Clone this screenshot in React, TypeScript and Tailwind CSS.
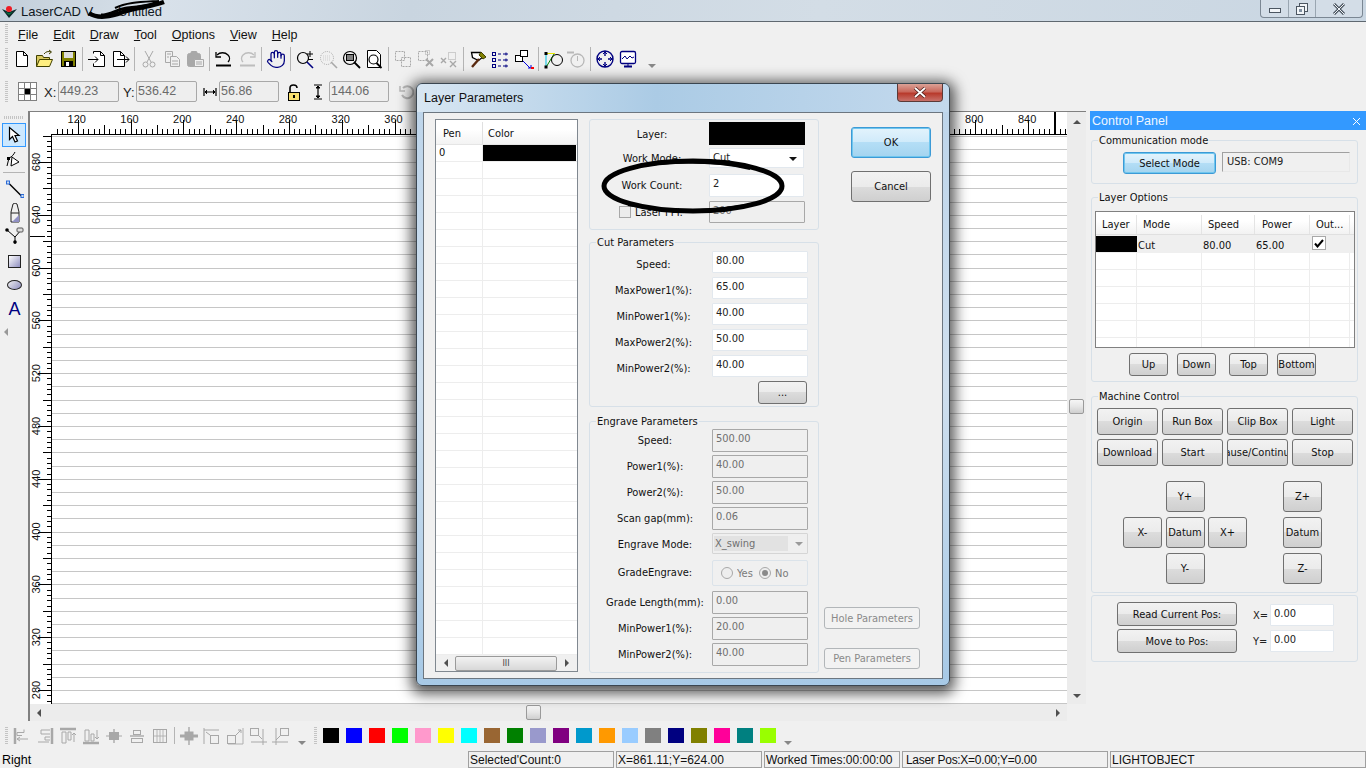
import React from "react";
import { Hand } from "lucide-react";

const cx = (...c: (string | false | undefined)[]) => c.filter(Boolean).join(" ");

const Ico = ({ children, w = 20, h = 20 }: { children: React.ReactNode; w?: number; h?: number }) => (
  <svg width={w} height={h} viewBox={`0 0 ${w} ${h}`} fill="none" stroke="#000" strokeWidth="1" shapeRendering="auto">
    {children}
  </svg>
);

const G = "#a8a8a8";

const topIcons: Record<string, React.ReactNode> = {
  new: <path d="M4.5 2.5h7l4 4v11h-11zM11.5 2.5v4h4" fill="#fff" />,
  open: (
    <>
      <path d="M1.5 17.5v-11h6l1 2h6v2" fill="#d8c860" stroke="#404000" />
      <path d="M1.5 17.5l3-7h13l-3 7z" fill="#ffef80" stroke="#404000" />
      <path d="M9 5c2-2.5 4-3 7-2M14 1l2.5 2-2.5 2" stroke="#404000" />
    </>
  ),
  save: (
    <>
      <rect x="3.5" y="2.5" width="14" height="15" fill="#808000" stroke="#000" />
      <rect x="6" y="3" width="9" height="6" fill="#ddd" stroke="none" />
      <rect x="6" y="12" width="9" height="5" fill="#000" stroke="none" />
      <rect x="8" y="13" width="3" height="4" fill="#fff" stroke="none" />
    </>
  ),
  imp: (
    <>
      <path d="M6.5 4.5v-2h7l4 4v11h-11v-3M13.5 2.5v4h4" fill="#fff" />
      <path d="M1 10.5h10M8 7.5l3 3-3 3" />
    </>
  ),
  exp: (
    <>
      <path d="M3.5 2.5h7l4 4v11h-11zM10.5 2.5v4h4" fill="#fff" />
      <path d="M7 10.5h12M16 7.5l3 3-3 3" />
    </>
  ),
  cut: (
    <g stroke={G}>
      <path d="M6 2l6 11M14 2l-6 11" />
      <circle cx="6.5" cy="15.5" r="2.5" />
      <circle cx="13.5" cy="15.5" r="2.5" />
    </g>
  ),
  copy: (
    <g stroke={G}>
      <path d="M3.5 2.5h7v11h-7z" />
      <path d="M8.5 7.5h6l3 3v7h-9z" fill="#f0f0f0" />
      <path d="M5 5h4M5 8h2M10 12h6M10 15h6" />
    </g>
  ),
  paste: (
    <g stroke={G}>
      <rect x="2.5" y="4.5" width="13" height="13" rx="2" fill={G} />
      <rect x="6" y="2.5" width="6" height="4" rx="1" fill={G} />
      <path d="M9.5 10.5h9v7h-9z" fill="#f0f0f0" />
      <path d="M11 13h6M11 15h6" />
    </g>
  ),
  undo: (
    <>
      <path d="M2 16.5h15" strokeWidth="2" />
      <path d="M3 6c3-3 8-3 11 0 2 2 2 5 0 7" strokeWidth="1.3" />
      <path d="M2 3v5h5" strokeWidth="1.3" />
    </>
  ),
  redo: (
    <g stroke="#bdbdbd">
      <path d="M3 16.5h15" strokeWidth="2" />
      <path d="M17 6c-3-3-8-3-11 0-2 2-2 5 0 7" strokeWidth="1.3" />
      <path d="M18 3v5h-5" strokeWidth="1.3" />
    </g>
  ),
  zoomIn: (
    <>
      <circle cx="8" cy="9" r="5.5" strokeWidth="1.2" />
      <path d="M12 13l6 6" stroke="#000080" strokeWidth="1.6" />
      <path d="M15 2v6M12 5h6M13 10.5h5" />
    </>
  ),
  zoomGray: (
    <>
      <circle cx="9" cy="9" r="6.5" stroke={G} strokeDasharray="1 1" />
      <path d="M5 7h8M5 9h8M5 11h8" stroke="#cfcfcf" strokeDasharray="1 1" />
      <path d="M13 13l6 6" stroke={G} strokeWidth="1.6" />
    </>
  ),
  zoomSel: (
    <>
      <circle cx="9" cy="9" r="6.5" strokeWidth="1.2" />
      <rect x="5.5" y="5.5" width="7" height="6" fill="#808080" />
      <path d="M13 13l6 6" strokeWidth="1.8" />
    </>
  ),
  zoomPage: (
    <>
      <path d="M3.5 1.5h9l4 4v13h-13z" fill="#fff" />
      <circle cx="9.5" cy="10.5" r="4.5" strokeWidth="1.2" />
      <path d="M12.5 14l5 5" strokeWidth="1.8" />
    </>
  ),
  al1: (
    <g stroke={G} strokeDasharray="2 1">
      <rect x="2.5" y="2.5" width="9" height="9" />
      <rect x="8.5" y="8.5" width="9" height="9" />
    </g>
  ),
  al2: (
    <g stroke={G}>
      <rect x="2.5" y="2.5" width="9" height="9" strokeDasharray="2 1" />
      <path d="M10 10l7 7M17 10l-7 7" strokeWidth="2" />
      <rect x="9.5" y="1.5" width="4" height="4" strokeDasharray="1 1" />
    </g>
  ),
  al3: (
    <g stroke={G}>
      <path d="M2 9l5 5M7 9l-5 5M11 12l6 6M17 12l-6 6" strokeWidth="1.4" />
      <rect x="9.5" y="3.5" width="7" height="7" strokeDasharray="1 1" />
    </g>
  ),
  hammer: (
    <>
      <path d="M3.5 3.5h9l3 4-5 4-6-3z" fill="#fff" strokeWidth="1.3" />
      <path d="M13 3l5 5-3 2-4-4z" fill="#808000" stroke="#404000" />
      <path d="M11 10l-7 8" stroke="#5a2a10" strokeWidth="2.4" />
    </>
  ),
  list: (
    <g stroke="#000080">
      <rect x="1.5" y="3.5" width="3" height="3" />
      <rect x="1.5" y="9.5" width="3" height="3" />
      <rect x="1.5" y="15.5" width="3" height="3" />
      <path d="M7 5h3M12 5h5M7 11h3M12 11h5M7 17h3M12 17h5M15 3.5v3M15 9.5v3M15 15.5v3" />
    </g>
  ),
  nodes: (
    <>
      <rect x="1.5" y="6.5" width="7" height="6" fill="#fff" />
      <rect x="6.5" y="1.5" width="7" height="6" fill="#fff" />
      <path d="M9 12l7 7" stroke="#0000e0" />
      <path d="M17 16v3h-3" stroke="#0000e0" />
      <rect x="17" y="18" width="3" height="2" fill="#f00" stroke="none" />
    </>
  ),
  circ: (
    <>
      <path d="M3 4.5h9" stroke="#e8e800" />
      <path d="M3 5v13" stroke="#00c0e0" />
      <path d="M3.5 17.5L11 5" stroke="#008000" />
      <rect x="1.5" y="3" width="3" height="3" fill="#000" stroke="none" />
      <rect x="1.5" y="16.5" width="3" height="3" fill="#000" stroke="none" />
      <circle cx="14" cy="11" r="5.5" />
    </>
  ),
  circGray: (
    <g stroke="#b8b8b8">
      <circle cx="11.5" cy="11.5" r="6.5" strokeWidth="1.3" />
      <path d="M11.5 7v5" />
      <path d="M1 3.5h7" strokeWidth="2" />
    </g>
  ),
  jog: (
    <g stroke="#000080">
      <circle cx="10" cy="10" r="8" strokeWidth="1.4" />
      <path d="M10 2v5M10 13v5M2 10h5M13 10h5" strokeWidth="1.4" />
      <path d="M8 5l2-2 2 2M8 15l2 2 2-2M5 8l-2 2 2 2M15 8l2 2-2 2" />
    </g>
  ),
  monitor: (
    <g stroke="#000080">
      <rect x="2.5" y="2.5" width="15" height="12" rx="1.5" fill="#fff" strokeWidth="1.3" />
      <path d="M4 10l3-3 2 3 3-3 2 2 2-1" />
      <path d="M6 17.5h8" strokeWidth="2" />
      <path d="M10 15v2" />
    </g>
  ),
};

const alignIcons: React.ReactNode[] = [
  <g stroke={G}><path d="M3 2v16" strokeWidth="2.5" /><path d="M5 6.5h7v-3M5 6.5v3h5M5 13h11" /><path d="M8 11l-3 2 3 2" /></g>,
  <g stroke={G}><path d="M17 2v16" strokeWidth="2.5" /><path d="M15 4H6v4h9M15 11h-5v3h5" /><path d="M3 16h11" /></g>,
  <g stroke={G}><path d="M2 3h16" strokeWidth="2.5" /><path d="M4 6h4v11H4zM10 6h3v8h-3z" /><path d="M16 7v9M14 9l2-2 2 2" /></g>,
  <g stroke={G}><path d="M2 17h16" strokeWidth="2.5" /><path d="M4 4h4v11H4zM10 8h3v7h-3z" /><path d="M16 4v9M14 11l2 2 2-2" /></g>,
  <g stroke={G}><path d="M10 3v14" strokeWidth="1.4" /><rect x="5.5" y="6.5" width="9" height="7" fill={G} /><path d="M2 10h3M15 10h3" /></g>,
  <g stroke={G}><path d="M3 10h14" strokeWidth="1.4" /><rect x="6.5" y="4.5" width="7" height="4" /><rect x="4.5" y="12.5" width="11" height="4" /></g>,
  <g stroke={G}><rect x="3.5" y="3.5" width="13" height="13" /><path d="M3 10h14M10 3v14M7 3v14M13 3v14" strokeWidth="0.8" /></g>,
];

const moveIcons: React.ReactNode[] = [
  <g stroke={G}><path d="M10 1v18M2 10h16" strokeWidth="1.4" /><rect x="6" y="6" width="8" height="8" fill={G} /><path d="M1 10h18" strokeWidth="3" /></g>,
  <g stroke={G}><path d="M2 2v16M2 4h15" /><rect x="8.5" y="9.5" width="8" height="8" /><path d="M4 6l4 3" /></g>,
  <g stroke={G}><path d="M18 2v16M3 18h15" strokeWidth="0.9" /><rect x="2.5" y="9.5" width="8" height="8" /><path d="M11 9l5-5M13 4h3v3" /></g>,
  <g stroke={G}><path d="M3 16h16M15 3v16" /><rect x="2.5" y="2.5" width="8" height="7" /><path d="M10 9l4 4" /></g>,
  <g stroke={G}><path d="M1 16h16M5 2v17" /><rect x="9.5" y="2.5" width="8" height="7" /><path d="M9 10l-4 4" /></g>,
];

const leftIcons: React.ReactNode[] = [
  <><path d="M3 7c3-1 5-4 6-6" /><path d="M3 7L1 15" /><path d="M6 6l-1 9 8-4z" fill="#fff" /><rect x="1" y="6" width="3" height="3" fill="#000" stroke="none" /></>,
  <><path d="M2.5 3l13 13" strokeWidth="1.4" /><rect x="0.5" y="1" width="3" height="3" fill="#cde" stroke="#2a6ad8" /><rect x="15" y="14.5" width="3" height="3" fill="#cde" stroke="#2a6ad8" /></>,
  <><path d="M8 1l2-1 2 1 2 8v10H6V9z" fill="#f0f0f0" stroke="#222" /><path d="M6 10h8" stroke="#222" /><path d="M7 19l7-7v7z" fill="#9090c4" stroke="none" /></>,
  <><path d="M2 3l8 7 7-8" /><path d="M10 10v7" /><circle cx="2" cy="3" r="1.8" fill="#000" stroke="none" /><circle cx="10" cy="15" r="1.8" fill="#000" stroke="none" /><rect x="12" y="1" width="6" height="4" rx="1" fill="#ddd" stroke="#555" /></>,
];

const App = () => {
  return (
    <div className="relative flex h-[768px] w-[1366px] flex-col overflow-hidden bg-[#f0f0f0] font-['Liberation_Sans',sans-serif] text-[12px] leading-none text-black">
      <TitleBar />
      <MenuBar />
      <MainToolbar />
      <CoordBar />
      <div className="flex h-[638px] w-full">
        <div className="flex w-[1090px] flex-col">
          <div className="flex h-[611px]">
            <LeftToolbar />
            <CanvasFrame />
          </div>
          <BottomToolbar />
        </div>
        <ControlPanel />
      </div>
      <StatusBar />
      <LayerDialog />
    </div>
  );
};

const TitleBar = () => (
  <div className="flex h-[22px] shrink-0 items-start border-b border-[#5f6870] bg-[linear-gradient(100deg,#c3cfda_0%,#d8e1ea_12%,#c9d5e0_30%,#d3dde6_60%,#c9d6e2_100%)]">
    <svg width="18" height="20" viewBox="0 0 18 20" className="ml-[1px] mt-[1px] shrink-0">
      <path d="M1 8l7 9 8-9-8 3z" fill="#0c2a2a" />
      <path d="M4 11l4 3 4-3-4 1z" fill="#0a7040" />
      <circle cx="8" cy="8" r="3" fill="#ee1c25" />
    </svg>
    <div className="relative ml-[2px] mt-[5px] flex h-[14px] w-[140px] text-[13px] text-[#10181f]">
      <span>LaserCAD V</span>
      <span className="absolute left-[97px] top-0">Untitled</span>
      <svg width="100" height="22" viewBox="0 0 100 22" className="absolute left-[60px] top-[-5px]">
        <path d="M8 13C16 19 30 17 42 12 56 7 70 7 83 2" stroke="#000" strokeWidth="4.5" fill="none" />
        <path d="M20 15c10 0 16-6 26-7 12-1 24-3 30-6" stroke="#000" strokeWidth="3" fill="none" />
        <path d="M34 8C46 2 60 2 78 1" stroke="#000" strokeWidth="2" fill="none" />
      </svg>
    </div>
    <div className="ml-auto mr-[3px] flex h-[18px] w-[103px] rounded-b-[4px] border border-t-0 border-[#7b8793] bg-[#d3dde7]">
      <div className="flex w-[28px] items-center justify-center border-r border-[#9aa6b1]">
        <div className="mt-[4px] h-[5px] w-[12px] border border-[#4c5661] bg-[#f2f5f8]" />
      </div>
      <div className="flex w-[27px] items-center justify-center border-r border-[#9aa6b1]">
        <svg width="12" height="12" viewBox="0 0 12 12" fill="#f2f5f8" stroke="#4c5661">
          <rect x="3.5" y="0.5" width="8" height="8" />
          <rect x="0.5" y="3.5" width="8" height="8" />
          <rect x="3" y="6" width="3" height="3" fill="#8090a0" stroke="none" />
        </svg>
      </div>
      <div className="flex flex-1 items-center justify-center">
        <svg width="14" height="12" viewBox="0 0 14 12" fill="none">
          <path d="M2 1l10 10M12 1L2 11" stroke="#4c5661" strokeWidth="3" />
          <path d="M2 1l10 10M12 1L2 11" stroke="#eef2f6" strokeWidth="1" />
        </svg>
      </div>
    </div>
  </div>
);

const Grip = ({ className }: { className?: string }) => (
  <div className={cx("w-[3px] bg-[repeating-linear-gradient(to_bottom,#c4c4c4_0,#c4c4c4_1px,transparent_1px,transparent_2px)]", className)} />
);

const MenuBar = () => (
  <div className="flex h-[23px] shrink-0 items-center pl-[5px]">
    <Grip className="h-[19px]" />
    <div className="ml-[10px] flex gap-[15px] pt-[3px] text-[12.5px] text-[#111]">
      {["File", "Edit", "Draw", "Tool", "Options", "View", "Help"].map((m) => (
        <span key={m}>
          <u>{m[0]}</u>
          {m.slice(1)}
        </span>
      ))}
    </div>
  </div>
);

const TB = ({ children }: { children: React.ReactNode }) => (
  <div className="flex h-[23px] w-[23px] shrink-0 items-center justify-center">{children}</div>
);
const Sep = ({ h = "h-[24px]" }: { h?: string }) => (
  <div className="flex w-[6px] shrink-0 justify-center">
    <div className={cx("w-px bg-[#b4b4b4]", h)} />
  </div>
);

const mainGroups: string[][] = [
  ["new", "open", "save"],
  ["imp", "exp"],
  ["cut", "copy", "paste"],
  ["undo", "redo"],
  ["hand"],
  ["zoomIn", "zoomGray", "zoomSel", "zoomPage"],
  ["al1", "al2", "al3"],
  ["hammer", "list", "nodes"],
  ["circ", "circGray"],
  ["jog", "monitor"],
];

const MainToolbar = () => (
  <div className="flex h-[28px] shrink-0 items-center pl-[5px]">
    <Grip className="h-[22px]" />
    <div className="ml-[2px] flex items-center pl-[0.5px]">
      {mainGroups.map((g, i) => (
        <React.Fragment key={i}>
          {i > 0 && <Sep />}
          {g.map((k) => (
            <TB key={k}>
              {k === "hand" ? <Hand size={20} strokeWidth={1.5} color="#000080" /> : <Ico>{topIcons[k]}</Ico>}
            </TB>
          ))}
        </React.Fragment>
      ))}
      <div className="ml-[8px] mt-[13px] h-0 w-0 border-x-[4px] border-t-[4px] border-x-transparent border-t-[#888]" />
    </div>
  </div>
);

const Readout = ({ value, className }: { value: string; className: string }) => (
  <div className={cx("h-[21px] rounded-[2px] border border-[#a8a8a8] bg-[#eeeeee] pl-[1px] pt-[3px] text-[12.5px] text-[#6b6b6b]", className)}>
    {value}
  </div>
);

const CoordBar = () => (
  <div className="flex h-[38px] shrink-0 items-start pl-[5px] pt-[8px]">
    <Grip className="h-[22px]" />
    <div className="ml-[10px] mt-[1px] grid h-[19px] w-[19px] grid-cols-3 grid-rows-3 gap-px border border-[#808080] bg-[#808080]">
      {[0, 1, 2, 3, 4, 5, 6, 7, 8].map((n) => (
        <div key={n} className={n === 4 ? "bg-black" : "bg-white"} />
      ))}
    </div>
    <span className="ml-[7px] mt-[5px] w-[14px] text-[13px] text-[#222]">X:</span>
    <Readout value="449.23" className="w-[61px]" />
    <span className="ml-[4px] mt-[5px] w-[13px] text-[13px] text-[#222]">Y:</span>
    <Readout value="536.42" className="w-[61px]" />
    <div className="ml-[6px] mt-[5px]">
      <Ico w={14} h={12}>
        <path d="M1 2v8M13 2v8M2 6h10" strokeWidth="1.2" />
        <path d="M4 4L2 6l2 2M10 4l2 2-2 2" fill="#000" />
      </Ico>
    </div>
    <Readout value="56.86" className="ml-[2px] w-[60px]" />
    <div className="ml-[8px] mt-[3px]">
      <Ico w={14} h={18}>
        <path d="M3 8V4c0-4 7-4 7 0" strokeWidth="1.6" />
        <rect x="1.5" y="8.5" width="11" height="8" fill="#f8e070" stroke="#000" />
        <rect x="6" y="11" width="2" height="3" fill="#000" stroke="none" />
      </Ico>
    </div>
    <div className="ml-[12px] mt-[3px]">
      <Ico w={10} h={16}>
        <path d="M1 1h8M1 15h8M5 2v12" strokeWidth="1.2" />
        <path d="M3 4l2-2 2 2zM3 12l2 2 2-2z" fill="#000" />
      </Ico>
    </div>
    <Readout value="144.06" className="ml-[6px] w-[60px]" />
    <div className="ml-[9px] mt-[2px]">
      <Ico w={16} h={18}>
        <path d="M5 5a6 6 0 1 1-1 7" stroke="#b8b8b8" strokeWidth="2" />
        <path d="M2 3v5h5" stroke="#b8b8b8" strokeWidth="1.5" />
      </Ico>
    </div>
  </div>
);

const LeftToolbar = () => (
  <div className="flex w-[28px] shrink-0 flex-col items-center">
    <div className="mt-[5px] h-[3px] w-[20px] bg-[repeating-linear-gradient(to_right,#c4c4c4_0,#c4c4c4_1px,transparent_1px,transparent_2px)]" />
    <div className="mt-[4px] flex h-[24px] w-[24px] items-center justify-center border border-[#3399ff] bg-[#cce8ff]">
      <Ico w={14} h={18}>
        <path d="M2.5 1.5v12l3-3 2.5 5.5 2.5-1-2.5-5.5h4z" fill="#fff" strokeWidth="1.2" />
      </Ico>
    </div>
    <div className="ml-[1px] mt-[2px] flex h-[22px] w-[24px] items-center justify-center">
      <Ico w={18} h={18}>{leftIcons[0]}</Ico>
    </div>
    <div className="mt-[1px] h-px w-[22px] bg-[#b4b4b4]" />
    <div className="ml-[1px] mt-[4px] flex h-[24px] w-[24px] items-center justify-center">
      <Ico w={18} h={18}>{leftIcons[1]}</Ico>
    </div>
    <div className="ml-[1px] flex h-[24px] w-[24px] items-center justify-center">
      <Ico w={20} h={20}>{leftIcons[2]}</Ico>
    </div>
    <div className="ml-[1px] flex h-[24px] w-[24px] items-center justify-center">
      <Ico w={20} h={20}>{leftIcons[3]}</Ico>
    </div>
    <div className="ml-[1px] flex h-[24px] w-[24px] items-center justify-center">
      <div className="h-[13px] w-[13px] border border-[#222] bg-[linear-gradient(135deg,#fff,#8f8fc0)]" />
    </div>
    <div className="ml-[1px] flex h-[24px] w-[24px] items-center justify-center">
      <div className="h-[10px] w-[15px] rounded-[50%] border border-[#222] bg-[linear-gradient(135deg,#eee,#8f8fc0)]" />
    </div>
    <div className="ml-[1px] flex h-[24px] w-[24px] items-center justify-center font-['Liberation_Sans',sans-serif] text-[18px] text-[#000080]">
      A
    </div>
    <div className="mr-[16px] mt-[7px] h-0 w-0 border-y-[4px] border-r-[4px] border-y-transparent border-r-[#999]" />
  </div>
);

const X0 = 47.7;
const Y0 = 50;
const K = 1.32;
const xOf = (v: number) => X0 + (v - 120) * K;
const yOf = (v: number) => Y0 + (680 - v) * K;

const Ruler = () => {
  const xt: number[] = [];
  for (let v = 104; v <= 868; v += 4) xt.push(v);
  const yt: number[] = [];
  for (let v = 700; v >= 268; v -= 4) yt.push(v);
  const grid: number[] = [];
  for (let v = 700; v >= 270; v -= 10) grid.push(v);
  const xl: number[] = [];
  for (let v = 120; v <= 840; v += 40) xl.push(v);
  const yl: number[] = [];
  for (let v = 680; v >= 280; v -= 40) yl.push(v);
  const len = (v: number) => (v % 40 === 0 ? 14 : v % 20 === 0 ? 9 : 5);
  return (
    <svg width="1037" height="592" viewBox="0 0 1037 592" className="block shrink-0 bg-white" shapeRendering="crispEdges">
      {grid.map((v) => (
        <line key={v} x1="22" x2="1037" y1={Math.round(yOf(v)) + 0.5} y2={Math.round(yOf(v)) + 0.5} stroke="#c6c6c6" />
      ))}
      <line x1="22" x2="1037" y1="22.5" y2="22.5" stroke="#000" />
      <line x1="21.5" x2="21.5" y1="22" y2="592" stroke="#000" />
      {xt.map((v) => (
        <line key={v} x1={Math.round(xOf(v)) + 0.5} x2={Math.round(xOf(v)) + 0.5} y1="22" y2={22 - len(v)} stroke="#000" />
      ))}
      {yt.map((v) => (
        <line key={v} y1={Math.round(yOf(v)) + 0.5} y2={Math.round(yOf(v)) + 0.5} x1="22" x2={22 - len(v)} stroke="#000" />
      ))}
      <line x1="1024.5" x2="1024.5" y1="0" y2="22" stroke="#000" strokeWidth="2" />
      <line x1="0" x2="15" y1="124.5" y2="124.5" stroke="#000" strokeWidth="1" />
      {xl.map((v) => (
        <text key={v} x={xOf(v) - 1} y="11" textAnchor="middle" fontSize="11" fill="#111" fontFamily="Liberation Sans, sans-serif">
          {v}
        </text>
      ))}
      {yl.map((v) => (
        <text
          key={v}
          x="0"
          y="0"
          transform={`translate(9.5 ${yOf(v)}) rotate(-90)`}
          textAnchor="middle"
          fontSize="11"
          fill="#111"
          fontFamily="Liberation Sans, sans-serif"
        >
          {v}
        </text>
      ))}
    </svg>
  );
};

const Tri = ({ dir, c = "#505050" }: { dir: "u" | "d" | "l" | "r"; c?: string }) => {
  const p = { u: "0,4 4,0 8,4", d: "0,0 8,0 4,4", l: "4,0 4,8 0,4", r: "0,0 0,8 4,4" }[dir];
  const vert = dir === "u" || dir === "d";
  return (
    <svg width={vert ? 8 : 4} height={vert ? 4 : 8} viewBox={vert ? "0 0 8 4" : "0 0 4 8"}>
      <polygon points={p} fill={c} />
    </svg>
  );
};

const Thumb = ({ className }: { className: string }) => (
  <div className={cx("rounded-[2px] border border-[#9a9a9a] bg-[linear-gradient(to_bottom,#f6f6f6,#e6e6e6_50%,#cfcfcf)]", className)} />
);

const CanvasFrame = () => (
  <div className="flex h-[610px] w-[1058px] flex-col border-l-2 border-t border-[#808080]">
    <div className="flex h-[592px]">
      <Ruler />
      <div className="flex w-[19px] flex-col items-center bg-[#ececec]">
        <div className="flex h-[20px] items-center">
          <Tri dir="u" />
        </div>
        <div className="h-[267px]" />
        <Thumb className="h-[15px] w-[15px]" />
        <div className="flex-1" />
        <div className="flex h-[17px] items-center">
          <Tri dir="d" />
        </div>
      </div>
    </div>
    <div className="flex h-[17px]">
      <div className="flex h-full w-[1037px] items-center bg-[#ececec]">
        <div className="flex w-[18px] justify-center">
          <Tri dir="l" />
        </div>
        <div className="w-[478px]" />
        <Thumb className="h-[15px] w-[15px]" />
        <div className="flex-1" />
        <div className="flex w-[18px] justify-center">
          <Tri dir="r" />
        </div>
      </div>
      <div className="w-[19px] bg-[#f0f0f0]" />
    </div>
  </div>
);

const swatches = [
  "bg-[#000000]", "bg-[#0000ff]", "bg-[#ff0000]", "bg-[#00ff00]", "bg-[#ff99cc]", "bg-[#ffff00]",
  "bg-[#00ffff]", "bg-[#996633]", "bg-[#008000]", "bg-[#9999cc]", "bg-[#800080]", "bg-[#0099cc]",
  "bg-[#ff9900]", "bg-[#99ccff]", "bg-[#808080]", "bg-[#000080]", "bg-[#808000]", "bg-[#ff0099]",
  "bg-[#008080]", "bg-[#99ff00]",
];

const BottomToolbar = () => (
  <div className="flex h-[27px] items-center pl-[5px]">
    <Grip className="h-[18px]" />
    <div className="ml-[2px] flex items-center">
      {alignIcons.map((n, i) => (
        <TB key={i}>
          <Ico>{n}</Ico>
        </TB>
      ))}
      <Sep h="h-[17px]" />
      {moveIcons.map((n, i) => (
        <TB key={i}>
          <Ico>{n}</Ico>
        </TB>
      ))}
      <div className="ml-[6px] mt-[14px] h-0 w-0 border-x-[4px] border-t-[4px] border-x-transparent border-t-[#888]" />
    </div>
    <Grip className="ml-[8px] h-[18px]" />
    <div className="ml-[6px] flex gap-[7px]">
      {swatches.map((s) => (
        <div key={s} className={cx("h-[15px] w-[16px]", s)} />
      ))}
    </div>
    <div className="ml-[8px] mt-[14px] h-0 w-0 border-x-[4px] border-t-[4px] border-x-transparent border-t-[#888]" />
  </div>
);

const StatusCell = ({ className, children }: { className: string; children?: React.ReactNode }) => (
  <div className={cx("flex h-[17px] items-center overflow-hidden whitespace-nowrap border border-[#a0a0a0] pl-[1px] text-[#111]", className)}>
    {children}
  </div>
);

const StatusBar = () => (
  <div className="flex h-[19px] shrink-0 items-start pt-[2px]">
    <div className="w-[468px] pl-[2px] pt-[3px] text-[12.5px]">Right</div>
    <StatusCell className="w-[146px]">Selected'Count:0</StatusCell>
    <StatusCell className="ml-[2px] w-[146px]">X=861.11;Y=624.00</StatusCell>
    <StatusCell className="ml-[2px] w-[136px]">Worked Times:00:00:00</StatusCell>
    <StatusCell className="ml-[2px] w-[206px] pl-[3px] tracking-[-0.3px]">Laser Pos:X=0.00;Y=0.00</StatusCell>
    <StatusCell className="ml-[2px] w-[256px]">LIGHTOBJECT</StatusCell>
  </div>
);

const Btn = ({
  label,
  className,
  kind = "normal",
}: {
  label: string;
  className: string;
  kind?: "normal" | "default" | "disabled";
}) => (
  <div
    className={cx(
      "flex shrink-0 items-center justify-center overflow-hidden whitespace-nowrap rounded-[3px] border",
      kind === "normal" && "border-[#707070] bg-[linear-gradient(to_bottom,#f2f2f2_0%,#ebebeb_50%,#dcdcdc_50%,#cfcfcf_100%)] text-[#111]",
      kind === "default" && "border-[#3c9ad6] bg-[linear-gradient(to_bottom,#e3f3fc_0%,#cfeafa_50%,#b4def6_50%,#a4d4ef_100%)] text-[#111] shadow-[inset_0_0_0_1px_#6fc6ee]",
      kind === "disabled" && "border-[#b2b6b9] bg-[#f2f2f2] text-[#8a8a8a]",
      className,
    )}
  >
    {label}
  </div>
);

const Group = ({
  label,
  className,
  children,
}: {
  label?: string;
  className: string;
  children: React.ReactNode;
}) => (
  <div className={cx("relative rounded-[3px] border border-[#d7e0e8]", className)}>
    {label && (
      <span className="absolute left-[6px] top-[-6px] bg-[#f0f0f0] px-px text-[#111]">{label}</span>
    )}
    {children}
  </div>
);

const Field = ({
  value,
  disabled,
  className,
}: {
  value: string;
  disabled?: boolean;
  className: string;
}) => (
  <div
    className={cx(
      "shrink-0 rounded-[1px] border pl-[3px] pt-[3px] text-[#222]",
      disabled ? "border-[#a8a8a8] bg-[#efefef] text-[#707070]" : "border-[#e2e8ee] bg-white",
      className,
    )}
  >
    {value}
  </div>
);

const cutRows = [
  ["Speed:", "80.00"],
  ["MaxPower1(%):", "65.00"],
  ["MinPower1(%):", "40.00"],
  ["MaxPower2(%):", "50.00"],
  ["MinPower2(%):", "40.00"],
];

const Label = ({ text, className }: { text: string; className: string }) => (
  <div className={cx("flex shrink-0 items-center justify-center whitespace-nowrap text-[#111]", className)}>{text}</div>
);

const ParamRow = ({
  label,
  children,
  pad,
}: {
  label: string;
  children: React.ReactNode;
  pad: "cut" | "eng";
}) => (
  <div className="flex">
    <Label text={label} className={pad === "cut" ? "h-[22px] w-[122px] pl-[5px] pt-[4px]" : "h-[23px] w-[122px] pl-[8px]"} />
    {children}
  </div>
);

const Radio = ({ on }: { on?: boolean }) => (
  <div className="flex h-[12px] w-[12px] items-center justify-center rounded-full border border-[#a8a8a8] bg-[#eeeeee]">
    {on && <div className="h-[6px] w-[6px] rounded-full bg-[#8a8a8a]" />}
  </div>
);

const LayerDialog = () => (
  <div className="absolute left-[416px] top-[83px] h-[603px] w-[534px] rounded-[6px] border border-[#3b4650] bg-[linear-gradient(to_bottom,#bcd4ea_0%,#cfdfee_50%,#a7c9e6_100%)] font-['DejaVu_Sans_Condensed','DejaVu_Sans',sans-serif] text-[11px] shadow-[0_3px_14px_5px_rgba(0,0,0,0.65)]">
    <div className="flex h-[28px] justify-between rounded-t-[6px] bg-[linear-gradient(to_right,#d8e6f2_0%,#abcbe5_45%,#c3d9ed_100%)]">
      <span className="ml-[7px] mt-[8px] font-['Liberation_Sans',sans-serif] text-[12.5px] text-[#111]">Layer Parameters</span>
      <div className="mr-[6px] flex h-[18px] w-[46px] items-center justify-center rounded-b-[4px] border border-t-0 border-[#5b3a38] bg-[linear-gradient(to_bottom,#dba196_0%,#c9685c_45%,#b83a2c_55%,#c8716a_100%)]">
        <svg width="14" height="11" viewBox="0 0 14 11" fill="none">
          <path d="M2 1l10 9M12 1L2 10" stroke="#50201c" strokeWidth="3.4" />
          <path d="M2 1l10 9M12 1L2 10" stroke="#fff" strokeWidth="1.8" />
        </svg>
      </div>
    </div>
    <div className="mx-[6px] flex h-[567px] gap-[11px] border border-[#6c7680] bg-[#f0f0f0] pl-[11px] pt-[6px]">
      <PenList />
      <div className="flex w-[230px] shrink-0 flex-col">
        <Group className="h-[111px] pt-[2px]">
          <div className="flex h-[23px]">
            <Label text="Layer:" className="h-[25px] w-[119px] pl-[5px]" />
            <div className="h-[23px] w-[96px] bg-black" />
          </div>
          <div className="mt-[3px] flex">
            <Label text="Work Mode:" className="h-[20px] w-[119px] pl-[5px]" />
            <div className="flex h-[20px] w-[95px] items-start justify-between border border-[#e2e8ee] bg-white pl-[3px] pr-[6px] pt-[3px] text-[#222]">
              Cut
              <div className="mt-[5px]">
                <Tri dir="d" c="#111" />
              </div>
            </div>
          </div>
          <div className="mt-[6px] flex">
            <Label text="Work Count:" className="h-[23px] w-[119px] pl-[5px]" />
            <Field value="2" className="h-[23px] w-[95px]" />
          </div>
          <div className="mt-[4px] flex">
            <div className="relative flex h-[22px] w-[119px] items-center pl-[29px]">
              <div className="h-[12px] w-[12px] border border-[#a8a8a8] bg-[#ececec]" />
              <span className="ml-[4px] text-[#111]">Laser FPI:</span>
            </div>
            <Field value="200" disabled className="h-[22px] w-[96px]" />
          </div>
        </Group>
        <Group label="Cut Parameters" className="mt-[12px] h-[165px] pt-[8px]">
          <div className="flex flex-col gap-[4px]">
            {cutRows.map(([l, v]) => (
              <ParamRow key={l} label={l} pad="cut">
                <Field value={v} className="h-[22px] w-[96px]" />
              </ParamRow>
            ))}
          </div>
          <div className="mt-[4px] flex justify-end pr-[11px]">
            <Btn label="..." className="h-[23px] w-[49px]" />
          </div>
        </Group>
        <Group label="Engrave Parameters" className="mt-[14px] h-[252px] pt-[7px]">
          <div className="flex flex-col gap-[3px]">
            {[
              ["Speed:", "500.00"],
              ["Power1(%):", "40.00"],
              ["Power2(%):", "50.00"],
              ["Scan gap(mm):", "0.06"],
            ].map(([l, v]) => (
              <ParamRow key={l} label={l} pad="eng">
                <Field value={v} disabled className="h-[23px] w-[96px]" />
              </ParamRow>
            ))}
            <ParamRow label="Engrave Mode:" pad="eng">
              <div className="flex h-[21px] w-[96px] items-center rounded-[1px] border border-[#d5d5d5] bg-[#efefef] px-[1px]">
                <div className="flex h-[15px] w-[74px] items-center bg-[#e2e2e2] pl-[1px] text-[#707070]">X_swing</div>
                <div className="ml-[7px]">
                  <Tri dir="d" c="#9a9a9a" />
                </div>
              </div>
            </ParamRow>
            <div className="mt-[1px] flex">
              <Label text="GradeEngrave:" className="h-[25px] w-[122px] pl-[8px]" />
              <div className="flex h-[26px] w-[96px] items-center rounded-[2px] border border-[#dbe3ea] pl-[8px] text-[#7a7a7a]">
                <Radio />
                <span className="ml-[4px] w-[18px] overflow-hidden">Yes</span>
                <div className="ml-[4px]">
                  <Radio on />
                </div>
                <span className="ml-[4px]">No</span>
              </div>
            </div>
            <div className="mt-[2px] flex flex-col gap-[3px]">
              {[
                ["Grade Length(mm):", "0.00"],
                ["MinPower1(%):", "20.00"],
                ["MinPower2(%):", "40.00"],
              ].map(([l, v]) => (
                <ParamRow key={l} label={l} pad="eng">
                  <Field value={v} disabled className="h-[23px] w-[96px]" />
                </ParamRow>
              ))}
            </div>
          </div>
        </Group>
      </div>
      <div className="ml-[-7px] flex h-[554px] w-[108px] flex-col items-end pb-[4px] pt-[8px]">
        <Btn label="OK" kind="default" className="h-[31px] w-[80px]" />
        <Btn label="Cancel" className="mt-[13px] h-[31px] w-[80px]" />
        <div className="flex-1" />
        <div className="mr-[11px] flex flex-col gap-[19px]">
          <Btn label="Hole Parameters" kind="disabled" className="h-[22px] w-[96px]" />
          <Btn label="Pen Parameters" kind="disabled" className="h-[21px] w-[96px]" />
        </div>
      </div>
    </div>
    <svg width="190" height="62" viewBox="0 0 190 62" fill="none" className="absolute left-[183px] top-[71px]">
      <ellipse cx="93" cy="31" rx="89" ry="25" stroke="#000" strokeWidth="5" />
      <path d="M28 14C60 6 110 5 150 14M28 50C70 58 120 57 165 46" stroke="#000" strokeWidth="2" />
    </svg>
  </div>
);

const PenList = () => (
  <div className="flex h-[553px] w-[143px] shrink-0 flex-col border border-[#808890] bg-white">
    <div className="flex h-[25px] shrink-0 border-b border-[#e5e5e5] bg-[linear-gradient(to_bottom,#ffffff_40%,#f3f3f3)] pt-[2px] text-[#111]">
      <div className="flex w-[47px] items-center border-r border-[#e0e0e0] pl-[7px]">Pen</div>
      <div className="flex items-center pl-[5px]">Color</div>
    </div>
    <div className="flex-1 overflow-hidden">
      {Array.from({ length: 30 }, (_, i) => (
        <div key={i} className="flex h-[17px] border-b border-[#ededed]">
          <div className="w-[47px] border-r border-[#ededed] pl-[3px] pt-[2px] text-[#111]">{i === 0 ? "0" : ""}</div>
          {i === 0 && <div className="h-[16px] w-[93px] bg-black" />}
        </div>
      ))}
    </div>
    <div className="flex h-[16px] shrink-0 items-center bg-[#f0f0f0]">
      <div className="flex w-[19px] justify-center">
        <Tri dir="l" />
      </div>
      <div className="flex h-[15px] w-[102px] items-center justify-center rounded-[2px] border border-[#9a9a9a] bg-[linear-gradient(to_bottom,#f2f2f2,#d8d8d8)] text-[9px] text-[#444]">
        III
      </div>
      <div className="flex flex-1 justify-center">
        <Tri dir="r" />
      </div>
    </div>
  </div>
);

const layerCols = ["w-[41px] pl-[6px]", "w-[65px] pl-[6px]", "w-[53px] pl-[6px]", "w-[55px] pl-[7px]", "w-[40px] pl-[6px]"];

const LayerTable = () => (
  <div className="ml-[3px] flex h-[137px] w-[260px] flex-col overflow-hidden border border-[#808080] bg-white">
    <div className="flex h-[23px] shrink-0 border-b border-[#e0e0e0] bg-[linear-gradient(to_bottom,#ffffff_40%,#f2f2f2)] pt-[3px] text-[#111]">
      {["Layer", "Mode", "Speed", "Power", "Out..."].map((h, i) => (
        <div key={h} className={cx("flex items-center border-r border-[#e4e4e4]", layerCols[i])}>
          {h}
        </div>
      ))}
    </div>
    <div className="flex h-[18px] shrink-0 bg-[#efefef] pt-[2px] text-[#111]">
      <div className="mt-[-1px] h-[16px] w-[41px] bg-black" />
      <div className="flex w-[65px] items-center pl-px">Cut</div>
      <div className="flex w-[53px] items-center pl-px">80.00</div>
      <div className="flex w-[55px] items-center pl-px">65.00</div>
      <div className="mt-[-1px] flex w-[40px] items-start pl-[2px]">
        <div className="flex h-[14px] w-[14px] items-center justify-center border border-[#a8a8a8] bg-white">
          <svg width="10" height="9" viewBox="0 0 10 9" fill="none">
            <path d="M1 4.5L3.5 7.5 9 1" stroke="#000" strokeWidth="2" />
          </svg>
        </div>
      </div>
    </div>
    {[0, 1, 2, 3, 4, 5].map((r) => (
      <div key={r} className="flex h-[17px] shrink-0 border-b border-[#ededed]">
        {layerCols.map((c, i) => (
          <div key={i} className={cx("border-r border-[#ededed]", c)} />
        ))}
      </div>
    ))}
  </div>
);

const ControlPanel = () => (
  <div className="flex w-[276px] flex-col font-['DejaVu_Sans_Condensed','DejaVu_Sans',sans-serif] text-[11px]">
    <div className="flex h-[19px] shrink-0 items-center justify-between bg-[#3399ff] pl-[2px] pr-[5px] pt-px font-['Liberation_Sans',sans-serif] text-[12.5px] text-[#eef6ff]">
      Control Panel
      <svg width="9" height="9" viewBox="0 0 9 9" stroke="#fff" fill="none">
        <path d="M1 1l7 7M8 1L1 8" />
      </svg>
    </div>
    <Group label="Communication mode" className="ml-px mt-[10px] h-[44px] w-[267px] pl-[31px] pt-[11px]">
      <div className="flex gap-[6px]">
        <Btn label="Select Mode" kind="default" className="h-[22px] w-[93px]" />
        <div className="h-[20px] w-[128px] border border-[#a0a0a0] border-b-[#e8e8e8] border-r-[#e8e8e8] pl-[4px] pt-[3px] text-[#222]">
          USB: COM9
        </div>
      </div>
    </Group>
    <Group label="Layer Options" className="ml-px mt-[13px] h-[185px] w-[267px] pt-[13px]">
      <LayerTable />
      <div className="ml-[37px] mt-[5px] flex">
        <Btn label="Up" className="h-[23px] w-[39px]" />
        <Btn label="Down" className="ml-[9px] h-[23px] w-[39px]" />
        <Btn label="Top" className="ml-[13px] h-[23px] w-[39px]" />
        <Btn label="Bottom" className="ml-[9px] h-[23px] w-[39px]" />
      </div>
    </Group>
    <Group label="Machine Control" className="ml-px mt-[14px] h-[197px] w-[267px] pl-[5px] pt-[11px]">
      <div className="grid grid-cols-[61px_61px_61px_61px] gap-x-[4px] gap-y-[4px]">
        {["Origin", "Run Box", "Clip Box", "Light", "Download", "Start", "Pause/Continue", "Stop"].map((b) => (
          <Btn key={b} label={b} className="h-[27px] w-[61px]" />
        ))}
      </div>
      <div className="ml-[26px] mt-[15px] flex">
        <div className="grid grid-cols-[39px_39px_39px] gap-x-[3.5px] gap-y-[5px]">
          <div />
          <Btn label="Y+" className="h-[31px] w-[39px]" />
          <div />
          <Btn label="X-" className="h-[31px] w-[39px]" />
          <Btn label="Datum" className="h-[31px] w-[39px]" />
          <Btn label="X+" className="h-[31px] w-[39px]" />
          <div />
          <Btn label="Y-" className="h-[31px] w-[39px]" />
        </div>
        <div className="ml-[36px] flex flex-col gap-[5px]">
          <Btn label="Z+" className="h-[31px] w-[39px]" />
          <Btn label="Datum" className="h-[31px] w-[39px]" />
          <Btn label="Z-" className="h-[31px] w-[39px]" />
        </div>
      </div>
    </Group>
    <Group className="ml-px mt-[2px] flex h-[67px] w-[267px] pl-[25px] pt-[6px]">
      <div className="flex flex-col gap-[3px]">
        <Btn label="Read Current Pos:" className="h-[24px] w-[120px]" />
        <Btn label="Move to Pos:" className="h-[24px] w-[120px]" />
      </div>
      <div className="ml-[16px] flex flex-col gap-[4px] pt-[2px]">
        <div className="flex items-center">
          <span className="w-[17px] text-[#222]">X=</span>
          <Field value="0.00" className="h-[22px] w-[64px]" />
        </div>
        <div className="flex items-center">
          <span className="w-[17px] text-[#222]">Y=</span>
          <Field value="0.00" className="h-[22px] w-[64px]" />
        </div>
      </div>
    </Group>
  </div>
);

export default App;
